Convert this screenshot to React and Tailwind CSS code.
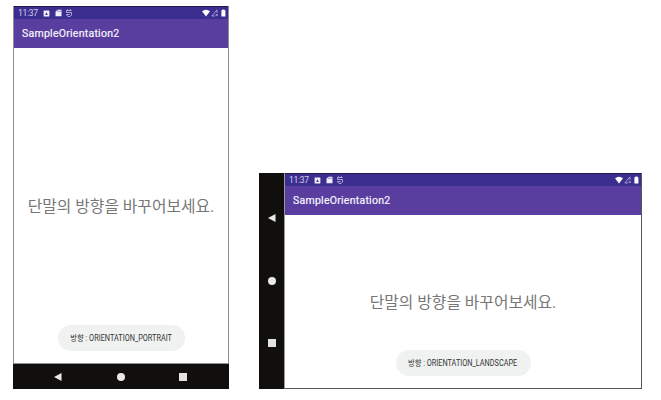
function StatusBar() {
  return (
    <div className="flex h-[13px] shrink-0 items-center border-t border-[#201846] bg-[#3b2e8f] pl-1 pr-[2px] text-[#d9cdee]">
      <span className="w-[20px] whitespace-nowrap text-[8.5px] leading-none tracking-[-0.3px]">11:37</span>
      <svg className="ml-[4.5px] h-[7px] w-[7px]" viewBox="0 0 7 7">
        <rect x="0.6" y="0.6" width="5.8" height="5.8" rx="0.4" fill="#f3edfb" />
        <path d="M2.2 4.9 3.5 2.2 4.8 4.9z" fill="#3b2e8f" />
      </svg>
      <svg className="ml-[5px] h-[8px] w-[7px]" viewBox="0 0 7 8">
        <path d="M2.5.7h4v6.6H.5V2.7z" fill="#f3edfb" />
        <path d="M2.6 1.7v1.2M4 1.7v1.2M5.4 1.7v1.2" stroke="#3b2e8f" strokeWidth="0.6" />
      </svg>
      <svg className="ml-[4.5px] h-[8px] w-[6px]" viewBox="0 0 6 8" fill="none" stroke="#c2b4e2" strokeWidth="0.9">
        <path d="M1.5.3v1.2M4.5.3v1.2M5.5 1.5h-5v2h5v2.5L4 7.5H2L.5 6V5.5h3" />
      </svg>
      <svg className="ml-auto h-[8px] w-[8px]" viewBox="0 0 8 8">
        <path d="M0 2.2Q4-.9 8 2.2L4 7.4z" fill="#fff" />
      </svg>
      <svg className="ml-px h-[8px] w-[7px]" viewBox="0 0 7 8" fill="none" stroke="#b7a4dc" strokeWidth="0.9">
        <path d="M6 4V.9L.8 7H4M4.7 4.9 6.7 7M6.7 4.9 4.7 7" />
      </svg>
      <svg className="ml-[3px] h-[8px] w-[5px]" viewBox="0 0 5 8">
        <path d="M1.4.4h2v.8h1v6.4h-4V1.2h1z" fill="#fff" />
      </svg>
    </div>
  );
}

function AppBar() {
  return (
    <header className="flex h-[29px] shrink-0 items-center bg-[#5a3e9f] pl-[8px] pt-[2px]">
      <h1 className="whitespace-nowrap text-[10.5px] leading-none tracking-[0.26px] text-[#f8f4fd] [-webkit-text-stroke:0.2px_#f8f4fd]">SampleOrientation2</h1>
    </header>
  );
}

function Message() {
  return <p className="whitespace-nowrap text-[15.8px] leading-[24px] text-[#777]">단말의 방향을 바꾸어보세요.</p>;
}

function Toast({ children, className }) {
  return (
    <div className={`flex h-[26px] shrink-0 items-center justify-center rounded-full bg-[#f0f2f1] ${className}`}>
      <span className="scale-x-[0.86] whitespace-nowrap pt-px text-[8.5px] leading-none text-[#333]">{children}</span>
    </div>
  );
}

function NavButtons() {
  return (
    <>
      <svg className="h-[8px] w-[8px]" viewBox="0 0 8 8"><path d="M0 4 7.5 0v8z" fill="#e8e8e6" /></svg>
      <span className="h-[8px] w-[8px] rounded-full bg-[#e8e8e6]" />
      <span className="h-[8px] w-[8px] bg-[#e3e3e1]" />
    </>
  );
}

export default function App() {
  return (
    <main className="flex h-[400px] w-[661px] items-start overflow-hidden bg-white pl-[13px] font-[Roboto,'Noto_Sans_CJK_KR',sans-serif]">
      <section className="mt-[6px] flex h-[383px] w-[216px] shrink-0 flex-col">
        <div className="flex min-h-0 flex-1 flex-col border-x border-b border-[#8f8f8f]">
          <StatusBar />
          <AppBar />
          <div className="flex min-h-0 flex-1 flex-col items-center pt-[147px]">
            <Message />
            <Toast className="mb-[12px] mt-auto w-[127px]">방향 : ORIENTATION_PORTRAIT</Toast>
          </div>
        </div>
        <nav className="flex h-[25px] shrink-0 items-center justify-between bg-[#100f0d] pl-[41px] pr-[42px]">
          <NavButtons />
        </nav>
      </section>
      <section className="ml-[30px] mt-[173px] flex h-[216px] w-[383px] shrink-0">
        <nav className="flex w-[25px] shrink-0 flex-col items-center justify-between bg-[#100f0d] pb-[42px] pt-[41px]">
          <NavButtons />
        </nav>
        <div className="flex min-w-0 flex-1 flex-col border-b border-l border-r border-[#55555a] border-l-[#999]">
          <StatusBar />
          <AppBar />
          <div className="flex min-h-0 flex-1 flex-col items-center pt-[76px]">
            <Message />
            <Toast className="mb-[12px] mt-auto w-[135px]">방향 : ORIENTATION_LANDSCAPE</Toast>
          </div>
        </div>
      </section>
    </main>
  );
}
